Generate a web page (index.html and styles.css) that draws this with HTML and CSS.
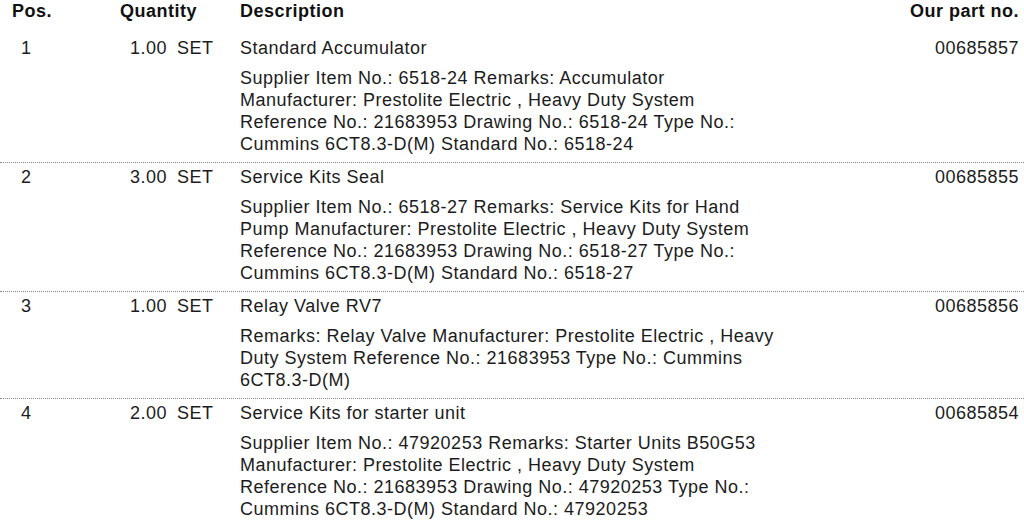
FILE: index.html
```html
<!DOCTYPE html>
<html>
<head>
<meta charset="utf-8">
<link rel="stylesheet" href="styles.css">
</head>
<body>
<div class="table">
  <div class="row head">
    <div class="c-pos">Pos.</div>
    <div class="c-qtyh">Quantity</div>
    <div class="c-desc">Description</div>
    <div class="c-part">Our part no.</div>
  </div>

  <div class="row item first">
    <div class="c-pos">1</div>
    <div class="c-qty">1.00</div>
    <div class="c-unit">SET</div>
    <div class="c-desc">Standard Accumulator</div>
    <div class="c-part">00685857</div>
    <div class="details">
      <span>Supplier Item No.: 6518-24 Remarks: Accumulator</span>
      <span>Manufacturer: Prestolite Electric , Heavy Duty System</span>
      <span>Reference No.: 21683953 Drawing No.: 6518-24 Type No.:</span>
      <span>Cummins 6CT8.3-D(M) Standard No.: 6518-24</span>
    </div>
  </div>

  <div class="row item">
    <div class="c-pos">2</div>
    <div class="c-qty">3.00</div>
    <div class="c-unit">SET</div>
    <div class="c-desc">Service Kits Seal</div>
    <div class="c-part">00685855</div>
    <div class="details">
      <span>Supplier Item No.: 6518-27 Remarks: Service Kits for Hand</span>
      <span>Pump Manufacturer: Prestolite Electric , Heavy Duty System</span>
      <span>Reference No.: 21683953 Drawing No.: 6518-27 Type No.:</span>
      <span>Cummins 6CT8.3-D(M) Standard No.: 6518-27</span>
    </div>
  </div>

  <div class="row item">
    <div class="c-pos">3</div>
    <div class="c-qty">1.00</div>
    <div class="c-unit">SET</div>
    <div class="c-desc">Relay Valve RV7</div>
    <div class="c-part">00685856</div>
    <div class="details">
      <span>Remarks: Relay Valve Manufacturer: Prestolite Electric , Heavy</span>
      <span>Duty System Reference No.: 21683953 Type No.: Cummins</span>
      <span>6CT8.3-D(M)</span>
    </div>
  </div>

  <div class="row item last">
    <div class="c-pos">4</div>
    <div class="c-qty">2.00</div>
    <div class="c-unit">SET</div>
    <div class="c-desc">Service Kits for starter unit</div>
    <div class="c-part">00685854</div>
    <div class="details">
      <span>Supplier Item No.: 47920253 Remarks: Starter Units B50G53</span>
      <span>Manufacturer: Prestolite Electric , Heavy Duty System</span>
      <span>Reference No.: 21683953 Drawing No.: 47920253 Type No.:</span>
      <span>Cummins 6CT8.3-D(M) Standard No.: 47920253</span>
    </div>
  </div>
</div>
</body>
</html>
```

FILE: styles.css
```css
html, body {
  margin: 0;
  padding: 0;
  background: #ffffff;
}

body {
  font-family: "Liberation Sans", Arial, sans-serif;
  font-size: 18px;
  line-height: 22px;
  letter-spacing: 0.5px;
  color: #1c1c1c;
  width: 1024px;
  height: 524px;
  overflow: hidden;
}

.table {
  display: flex;
  flex-direction: column;
}

.row {
  display: grid;
  grid-template-columns: 120px 47px 73px 1fr auto;
  white-space: nowrap;
}

.head {
  font-weight: bold;
  color: #111;
  margin-bottom: 15px;
}

.head .c-pos {
  padding-left: 12px;
}

.c-qtyh {
  grid-column: 2 / 4;
}

.c-pos {
  grid-column: 1;
  padding-left: 21px;
}

.c-qty {
  grid-column: 2;
  text-align: right;
}

.c-unit {
  grid-column: 3;
  padding-left: 10px;
}

.c-desc {
  grid-column: 4;
}

.c-part {
  grid-column: 5;
  text-align: right;
  padding-right: 5px;
}

.item {
  padding-top: 3px;
  padding-bottom: 7px;
  border-bottom: 1px dotted #8a8a8a;
}

.item.first {
  padding-top: 0;
}

.item.last {
  border-bottom: none;
}

.details {
  grid-column: 4 / 6;
  grid-row: 2;
  margin-top: 8px;
  display: flex;
  flex-direction: column;
}
```
